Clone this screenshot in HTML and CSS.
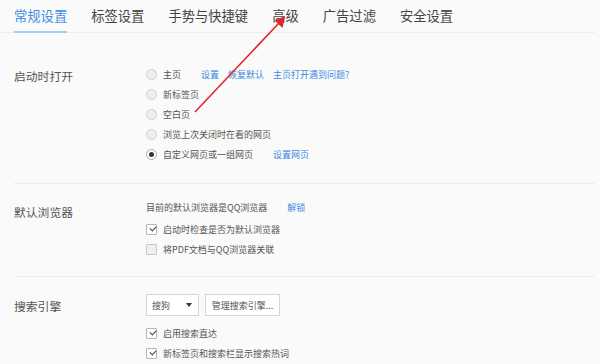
FILE: index.html
```html
<!DOCTYPE html>
<html lang="zh-CN">
<head>
    <meta charset="UTF-8">
    <title>设置</title>
    <link rel="stylesheet" href="styles.css">
</head>
<body>
    <div class="page">
        <nav class="tabs">
            <span class="tab active">常规设置</span>
            <span class="tab">标签设置</span>
            <span class="tab">手势与快捷键</span>
            <span class="tab">高级</span>
            <span class="tab">广告过滤</span>
            <span class="tab">安全设置</span>
        </nav>

        <section class="section first">
            <div class="label">启动时打开</div>
            <div class="options">
                <div class="row"><span class="radio"></span><span class="text">主页</span>
                    <a class="link">设置</a><a class="link">恢复默认</a><a class="link">主页打开遇到问题?</a></div>
                <div class="row"><span class="radio"></span><span class="text">新标签页</span></div>
                <div class="row"><span class="radio"></span><span class="text">空白页</span></div>
                <div class="row"><span class="radio"></span><span class="text">浏览上次关闭时在看的网页</span></div>
                <div class="row"><span class="radio checked"></span><span class="text">自定义网页或一组网页</span>
                    <a class="link wide">设置网页</a></div>
            </div>
        </section>

        <section class="section">
            <div class="label low">默认浏览器</div>
            <div class="options">
                <div class="row"><span class="plain">目前的默认浏览器是QQ浏览器</span><a class="link unlock">解锁</a></div>
                <div class="row spaced"><span class="check checked"></span><span class="text">启动时检查是否为默认浏览器</span></div>
                <div class="row"><span class="check"></span><span class="text">将PDF文档与QQ浏览器关联</span></div>
            </div>
        </section>

        <section class="section last">
            <div class="label">搜索引擎</div>
            <div class="options">
                <div class="controls">
                    <div class="select">搜狗<span class="caret"></span></div>
                    <div class="button">管理搜索引擎...</div>
                </div>
                <div class="row"><span class="check checked"></span><span class="text">启用搜索直达</span></div>
                <div class="row"><span class="check checked"></span><span class="text">新标签页和搜索栏显示搜索热词</span></div>
            </div>
        </section>

        <svg class="arrow" width="600" height="364" viewBox="0 0 600 364">
            <line x1="195" y1="112" x2="279" y2="23" stroke="#e0262b" stroke-width="1.6"/>
            <polygon points="285,16 282.5,28 274.5,20.5" fill="#e0262b"/>
        </svg>
    </div>
</body>
</html>
```

FILE: styles.css
```css
* {
    box-sizing: border-box;
}
body {
    margin: 0;
    background: #fafafa;
    font-family: "Noto Sans CJK SC", "Noto Sans", sans-serif;
    color: #555;
}
.page {
    position: relative;
    width: 600px;
    height: 364px;
    overflow: hidden;
    padding-right: 5px;
}
.tabs {
    display: flex;
    gap: 24px;
    padding-left: 14px;
    border-bottom: 1px solid #eeeeee;
}
.tab {
    font-size: 13.3px;
    line-height: 16px;
    padding: 8px 0 7px;
    border-bottom: 2px solid transparent;
    color: #444;
    margin-bottom: -1px;
}
.tab.active {
    color: #3e8ee6;
    border-bottom-color: #a9cdf0;
}
.section {
    display: flex;
    margin-left: 14px;
    padding: 13px 0 17px;
    border-bottom: 1px solid #ececec;
}
.section.first {
    padding-top: 31px;
    padding-bottom: 19px;
}
.section.last {
    border-bottom: none;
    padding-top: 17px;
}
.label {
    width: 132px;
    flex-shrink: 0;
    font-size: 11.8px;
    line-height: 20px;
    margin-top: 2px;
    color: #555;
}
.label.low {
    margin-top: 5px;
}
.options {
    display: flex;
    flex-direction: column;
}
.row {
    display: flex;
    align-items: center;
    height: 20px;
    font-size: 9px;
}
.row.spaced {
    margin-top: 2px;
}
.text {
    margin-left: 6px;
    color: #555;
}
.plain {
    color: #555;
}
.link {
    color: #3b8be4;
    margin-left: 9px;
}
.row .text + .link {
    margin-left: 20px;
}
.row .text + .link.wide {
    margin-left: 20px;
}
.link.unlock {
    margin-left: 20px;
}
.radio {
    width: 11px;
    height: 11px;
    border-radius: 50%;
    border: 1px solid #cfcfcf;
    background: #eeeeee;
    display: flex;
    align-items: center;
    justify-content: center;
}
.radio.checked {
    background: #fff;
    border-color: #aaa;
}
.radio.checked::after {
    content: "";
    width: 5px;
    height: 5px;
    border-radius: 50%;
    background: #333;
}
.check {
    width: 11px;
    height: 11px;
    border: 1px solid #c8c8c8;
    border-radius: 1px;
    background: #efefef;
    position: relative;
}
.check.checked {
    background: #fff;
    border-color: #b5b5b5;
}
.check.checked::after {
    content: "";
    position: absolute;
    left: 2.5px;
    top: 1.5px;
    width: 5px;
    height: 3px;
    border-left: 1.5px solid #444;
    border-bottom: 1.5px solid #444;
    transform: rotate(-45deg);
}
.controls {
    display: flex;
    gap: 6px;
    margin-bottom: 7px;
}
.select, .button {
    height: 22px;
    border: 1px solid #d5d5d5;
    background: #fff;
    font-size: 9px;
    color: #555;
    display: flex;
    align-items: center;
}
.select {
    width: 53px;
    padding-left: 5px;
    justify-content: space-between;
    padding-right: 6px;
}
.caret {
    width: 0;
    height: 0;
    border-left: 3.5px solid transparent;
    border-right: 3.5px solid transparent;
    border-top: 4px solid #333;
}
.button {
    width: 75px;
    justify-content: center;
}
.arrow {
    position: absolute;
    left: 0;
    top: 0;
    pointer-events: none;
}
```
